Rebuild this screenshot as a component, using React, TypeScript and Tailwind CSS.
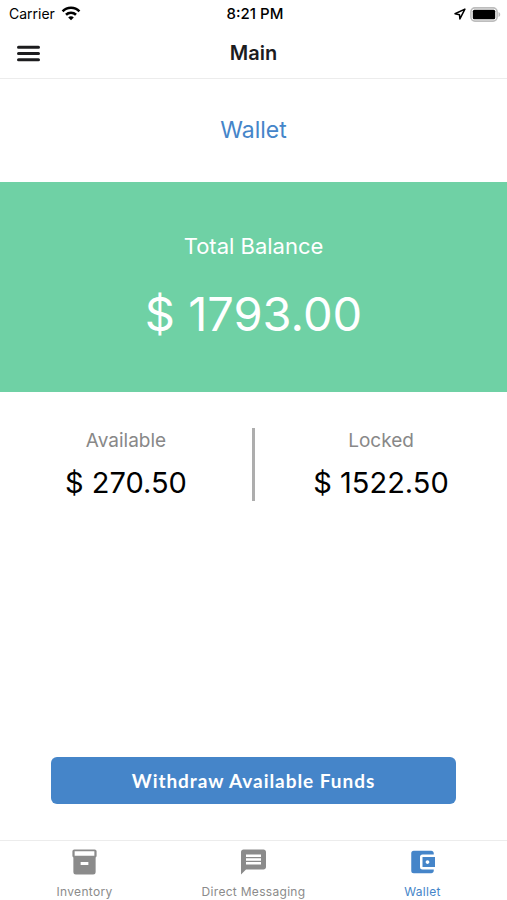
// App.tsx

import React from 'react';
import { MdAccountBalanceWallet, MdMessage } from 'react-icons/md';

interface AmountProps {
    label: string;
    amount: number;
}

interface TabProps {
    label: string;
    active?: boolean;
    children: React.ReactNode;
}

const formatAmount = (amount: number) => `$ ${amount.toFixed(2)}`;

const WifiIcon = () => (
    <svg width="20" height="16" viewBox="0 0 20 16" fill="none" stroke="currentColor" strokeWidth="2.6" aria-hidden="true">
        <path d="M1.6 5.300C6.200.6 13.800.6 18.400 5.300" />
        <path d="M5 8.800c2.800-2.700 7.200-2.700 10 0" />
        <path d="M10 14.200 7.200 11.400c1.600-1.500 4-1.500 5.600 0z" fill="currentColor" stroke="none" />
    </svg>
);

const LocationIcon = () => (
    <svg width="12" height="12" viewBox="0 0 12 12" fill="none" stroke="currentColor" strokeWidth="1.5" strokeLinejoin="round" aria-hidden="true">
        <path d="M10.900 1.100 1 5.800l4.500.9.4 4.200z" />
    </svg>
);

const BatteryIcon = () => (
    <svg width="31" height="15" viewBox="0 0 31 15" aria-hidden="true">
        <rect x="0.9" y="0.9" width="26.2" height="13.2" rx="4" fill="#fff" stroke="#bdbdbd" strokeWidth="1.6" />
        <rect x="2.800" y="2.800" width="22.400" height="9.400" rx="1.500" fill="#000" />
        <path d="M28.500 5c2.300.9 2.300 4.100 0 5z" fill="#bdbdbd" />
    </svg>
);

const MenuIcon = () => (
    <svg width="31" height="31" viewBox="0 0 31 31" stroke="currentColor" strokeWidth="3" strokeLinecap="round" aria-hidden="true">
        <path d="M5.500 9.200h20M5.500 15.500h20M5.500 21.800h20" />
    </svg>
);

const BoxIcon = () => (
    <svg width="31" height="31" viewBox="0 0 31 31" fill="currentColor" aria-hidden="true">
        <path fillRule="evenodd" d="M5 2.500h21a2 2 0 0 1 2 2v4.500a2 2 0 0 1-1 1.800V26a2.500 2.500 0 0 1-2.500 2.500h-18A2.500 2.500 0 0 1 4 26V10.800A2 2 0 0 1 3 9V4.500a2 2 0 0 1 2-2zM5.300 4.500v4.500h20.400V4.500zM11.500 15.500v3h8v-3z" />
    </svg>
);

const Amount: React.FC<AmountProps> = ({ label, amount }) => (
    <div className="flex flex-1 flex-col items-center pt-px">
        <span className="text-[19px] leading-6 text-[#888888]">{label}</span>
        <span className="mt-3 text-[29px] leading-9 text-black">{formatAmount(amount)}</span>
    </div>
);

const Tab: React.FC<TabProps> = ({ label, active, children }) => (
    <a href="#" className={`flex flex-1 flex-col items-center pt-1.5 text-[31px] ${active ? 'text-[#4585c9]' : 'text-[#8b8b8b]'}`}>
        {children}
        <span className="mt-[7px] text-xs tracking-wide">{label}</span>
    </a>
);

export default function App() {
    return (
        <div className="flex min-h-screen flex-col bg-white font-['Inter',sans-serif]">
            <div className="grid h-7 grid-cols-3 items-center pr-1.5 pl-[9px] text-sm text-black">
                <div className="flex items-center gap-1.5">
                    Carrier
                    <WifiIcon />
                </div>
                <div className="text-center text-[15px] font-medium">8:21 PM</div>
                <div className="flex items-center justify-end gap-1">
                    <LocationIcon />
                    <BatteryIcon />
                </div>
            </div>

            <header className="grid h-[51px] grid-cols-3 items-center border-b border-[#ececec] px-[13px] text-[#1c1c1e]">
                <button type="button" aria-label="Menu" className="justify-self-start">
                    <MenuIcon />
                </button>
                <h1 className="text-center text-xl leading-6 font-semibold">Main</h1>
            </header>

            <main className="flex flex-1 flex-col">
                <h2 className="flex h-[103px] items-center justify-center text-[23px] text-[#4585c9]">Wallet</h2>

                <section className="flex h-[210px] flex-col items-center bg-[#6fd1a5] pt-12 text-white">
                    <span className="text-[22px] leading-8">Total Balance</span>
                    <span className="mt-7 text-[47px] leading-12">{formatAmount(1793)}</span>
                </section>

                <section className="flex pt-9">
                    <Amount label="Available" amount={270.5} />
                    <div className="h-[73px] w-[3px] bg-[#adadad]" />
                    <Amount label="Locked" amount={1522.5} />
                </section>

                <div className="mt-auto px-[51px] pb-9">
                    <button type="button" className="h-[47px] w-full rounded-md bg-[#4585c9] pt-0.5 font-['Lato',sans-serif] text-[19px] font-bold tracking-wider text-white">
                        Withdraw Available Funds
                    </button>
                </div>
            </main>

            <nav className="flex h-[60px] border-t border-[#ececec]">
                <Tab label="Inventory">
                    <BoxIcon />
                </Tab>
                <Tab label="Direct Messaging">
                    <MdMessage />
                </Tab>
                <Tab label="Wallet" active>
                    <MdAccountBalanceWallet />
                </Tab>
            </nav>
        </div>
    );
}
